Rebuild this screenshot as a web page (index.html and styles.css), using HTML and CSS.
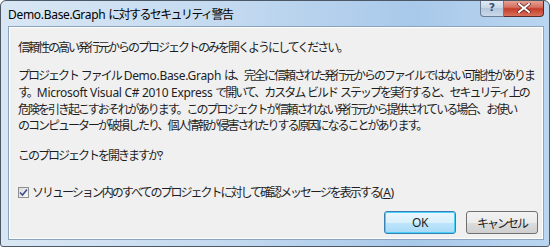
FILE: index.html
```html
<html>
<head>
	<link rel="stylesheet" href="styles.css">
</head>
<body>
	<div class="window">
		<div class="titlebar">
			<span class="title"><span class="en">Demo.Base.Graph </span>に対するセキュリティ警告</span>
			<div class="caption-buttons">
				<div class="btn-help">?</div>
				<div class="btn-close">
					<svg width="14" height="10" viewBox="0 0 14 10">
						<path d="M2 1 L12 9 M12 1 L2 9" stroke="#5a1a1a" stroke-width="3.4" stroke-linecap="square"/>
						<path d="M2 1 L12 9 M12 1 L2 9" stroke="#ffffff" stroke-width="2" stroke-linecap="square"/>
					</svg>
				</div>
			</div>
		</div>
		<div class="client">
			<p class="msg">信頼性の高い発行元からのプロジェクトのみを開くようにしてください。</p>
			<p class="msg detail">プロジェクト<span class="en"> </span>ファイル<span class="en"> Demo.Base.Graph </span>は、完全に信頼された発行元からのファイルではない可能性がありま<br>す。<span class="en">Microsoft Visual C# 2010 Express </span>で開いて、カスタム<span class="en"> </span>ビルド<span class="en"> </span>ステップを実行すると、セキュリティ上の<br>危険を引き起こすおそれがあります。このプロジェクトが信頼されない発行元から提供されている場合、お使い<br>のコンピューターが破損したり、個人情報が侵害されたりする原因になることがあります。</p>
			<p class="msg question">このプロジェクトを開きますか<span class="en">?</span></p>
			<label class="check-row">
				<span class="checkbox">
					<svg width="9" height="9" viewBox="0 0 9 9">
						<path d="M1 4.5 L3.5 7 L8 1.5" fill="none" stroke="#3b4f8c" stroke-width="1.6"/>
					</svg>
				</span>
				<span>ソリューション内のすべてのプロジェクトに対して確認メッセージを表示する<span class="en">(<u>A</u>)</span></span>
			</label>
			<div class="actions">
				<button class="button default"><span class="en">OK</span></button>
				<button class="button">キャンセル</button>
			</div>
		</div>
	</div>
</body>
</html>
```

FILE: styles.css
```css
* {
	margin: 0;
	padding: 0;
	box-sizing: border-box;
}

body {
	font-family: "Noto Sans CJK JP", "Noto Sans", sans-serif;
	font-size: 12px;
	color: #1e1e1e;
	background: #ffffff;
}

.en {
	font-family: "Noto Sans", "Noto Sans CJK JP", sans-serif;
	letter-spacing: -0.3px;
}

.window {
	width: 550px;
	height: 247px;
	border: 1px solid #4c5866;
	border-radius: 6px 6px 3px 3px;
	background: linear-gradient(to right, #d9e7f4 0%, #c4daf0 40%, #a9c9ea 75%, #b9d5f0 100%);
	padding: 0 5px 6px 7px;
	display: flex;
	flex-direction: column;
	overflow: hidden;
}

.titlebar {
	height: 25px;
	flex: none;
	display: flex;
	justify-content: space-between;
	align-items: flex-start;
}

.title {
	padding-top: 4px;
	font-size: 12px;
	color: #000;
	white-space: nowrap;
	letter-spacing: -1.6px;
}

.caption-buttons {
	display: flex;
	margin-top: -1px;
}

.btn-help {
	width: 24px;
	height: 17px;
	border: 1px solid #6a7d94;
	border-top: none;
	border-radius: 0 0 0 4px;
	background: linear-gradient(to bottom, #e4edf6 0%, #c6d6e7 50%, #b2c6dc 51%, #c9d9ea 100%);
	color: #3e4e66;
	font-family: "DejaVu Sans", sans-serif;
	font-size: 11px;
	font-weight: bold;
	text-align: center;
	line-height: 16px;
}

.btn-close {
	width: 40px;
	height: 17px;
	border: 1px solid #5c2a2a;
	border-top: none;
	border-left: none;
	border-radius: 0 0 4px 0;
	background: linear-gradient(to bottom, #e9a99c 0%, #d5705f 45%, #c43d2a 55%, #d8715b 100%);
	display: flex;
	align-items: center;
	justify-content: center;
}

.client {
	flex: 1;
	min-height: 0;
	background: #f0f0f0;
	border: 1px solid #8aa3be;
	box-shadow: inset 0 0 0 1px #ffffff;
	padding: 12px 5px 9px 9px;
	display: flex;
	flex-direction: column;
	letter-spacing: -2px;
	white-space: nowrap;
}

.msg {
	line-height: 16px;
}

.detail {
	margin-top: 12px;
}

.question {
	margin-top: 14px;
}

.check-row {
	margin-top: 20px;
	display: flex;
	align-items: center;
	gap: 3px;
	line-height: 16px;
}

.checkbox {
	width: 11px;
	height: 11px;
	border: 1px solid #8e8f8f;
	background: linear-gradient(to bottom right, #dcdcdc, #fafafa);
	display: flex;
	align-items: center;
	justify-content: center;
}

.actions {
	margin-top: 10px;
	display: flex;
	justify-content: flex-end;
	gap: 10px;
}

.button {
	width: 72px;
	height: 23px;
	border: 1px solid #707070;
	border-radius: 3px;
	background: linear-gradient(to bottom, #f2f2f2 0%, #ebebeb 50%, #dddddd 51%, #cfcfcf 100%);
	font-family: inherit;
	font-size: 12px;
	letter-spacing: -2px;
	color: #1e1e1e;
}

.button.default {
	border-color: #3c7fb1;
	background: linear-gradient(to bottom, #eaf6fd 0%, #d9f0fc 50%, #bee6fd 51%, #a7d9f5 100%);
	box-shadow: inset 0 0 0 1px #48d1fc;
}
```
